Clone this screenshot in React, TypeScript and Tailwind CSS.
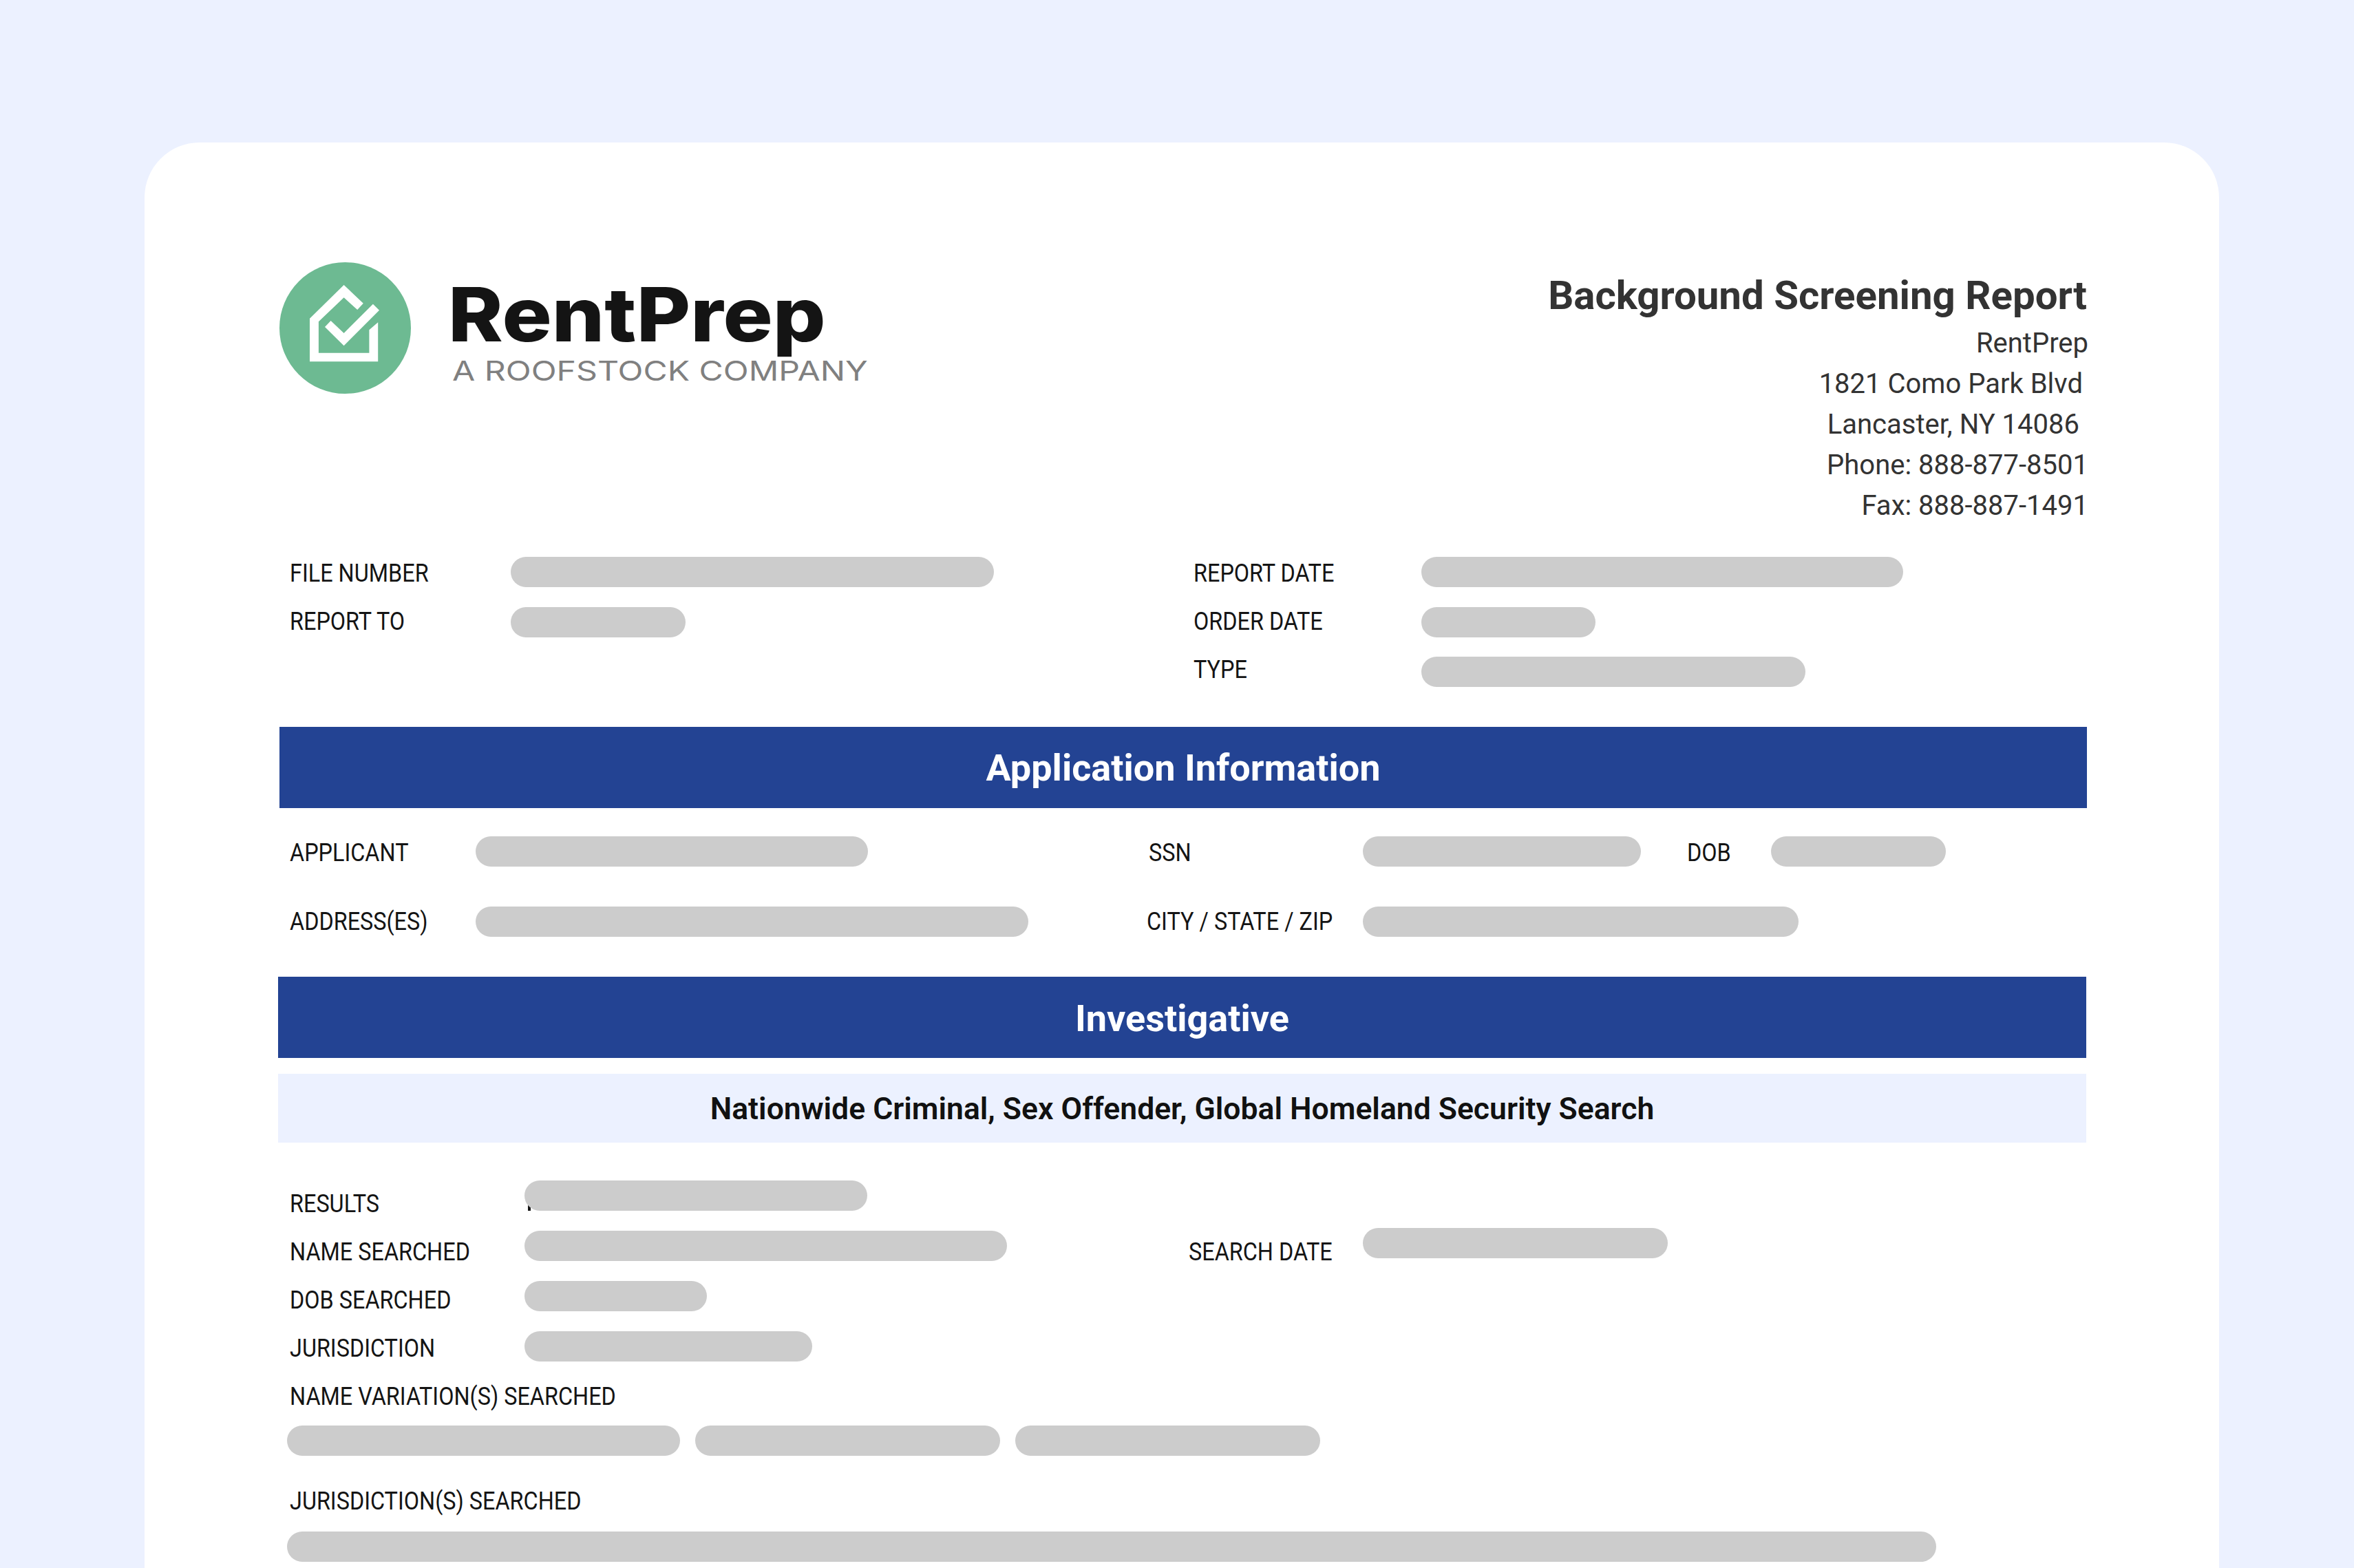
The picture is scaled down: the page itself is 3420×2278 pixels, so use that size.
const Pill = ({ className }: { className: string }) => (
  <div className={`h-[44px] shrink-0 rounded-full bg-[#cccccc] ${className}`} />
);

const Label = ({ children, className = "" }: { children: React.ReactNode; className?: string }) => (
  <div className={`h-[70px] shrink-0 whitespace-nowrap text-[36px] leading-[70px] text-[#141414] ${className}`}>
    <span className="inline-block origin-left scale-x-[0.9]">{children}</span>
  </div>
);

const Logo = () => (
  <div className="flex">
    <svg viewBox="0 0 191 191" className="h-[191px] w-[191px] shrink-0">
      <circle cx="95.5" cy="95.5" r="95.5" fill="#6dba92" />
      <path
        fill="#fff"
        d="M93.6 33 L121.8 59.7 L113.2 69 L93.6 51.3 L56.9 86.3 V131.7 H130.4 V98.3 L143.2 87.3 V144.3 H44 V81.7 Z"
      />
      <path fill="#fff" d="M135.9 60.7 L145 69.7 L93.6 121.3 L66 94 L74.6 85 L93.6 103 Z" />
    </svg>
    <div className="ml-[54px] pt-[26px] [font-family:Inter,sans-serif]">
      <div className="h-[100px] origin-left scale-x-[1.115] text-[108px] font-extrabold leading-[100px] text-[#141414]">
        RentPrep
      </div>
      <div className="ml-[6px] mt-[12px] h-[40px] origin-left scale-x-[1.205] whitespace-nowrap text-[40px] leading-[40px] text-[#808080]">
        A ROOFSTOCK COMPANY
      </div>
    </div>
  </div>
);

export default function App() {
  return (
    <div className="h-[2278px] w-[3420px] overflow-hidden bg-[#ecf1ff] pt-[207px] [font-family:Roboto,sans-serif]">
      <div className="ml-[210px] h-[2200px] w-[3014px] rounded-[80px] bg-white pl-[196px] pr-[192px] pt-[174px]">
        {/* Header */}
        <div className="flex items-start justify-between">
          <Logo />
          <div className="pt-[13px] text-right">
            <div className="h-[70px] text-[58.2px] font-bold leading-[70px] text-[#333333]">
              Background Screening Report
            </div>
            <div className="-mr-[2px] mt-[5px] text-[40px] leading-[59px] text-[#333333]">
              <div>RentPrep</div>
              <div className="pr-[8px]">1821 Como Park Blvd</div>
              <div className="pr-[13px]">Lancaster, NY 14086</div>
              <div>Phone: 888-877-8501</div>
              <div>Fax: 888-887-1491</div>
            </div>
          </div>
        </div>

        {/* Report meta */}
        <div className="mt-[34px] flex h-[201px] pl-[15px]">
          <div className="w-[321px] shrink-0">
            <Label>FILE NUMBER</Label>
            <Label>REPORT TO</Label>
          </div>
          <div className="flex w-[992px] shrink-0 flex-col gap-[28.5px] pt-[11px]">
            <Pill className="w-[702px]" />
            <Pill className="w-[254px]" />
          </div>
          <div className="w-[331px] shrink-0">
            <Label>REPORT DATE</Label>
            <Label>ORDER DATE</Label>
            <Label>TYPE</Label>
          </div>
          <div className="flex flex-col gap-[28.5px] pt-[11px]">
            <Pill className="w-[700px]" />
            <Pill className="w-[253px]" />
            <Pill className="w-[558px]" />
          </div>
        </div>

        {/* Application Information */}
        <div className="mt-[57px] flex h-[118px] items-center justify-center bg-[#234393] text-[54px] font-bold text-white">
          Application Information
        </div>
        <div className="mt-[41px] flex flex-col gap-[58px] pl-[15px]">
          <div className="flex h-[44px] items-center">
            <Label className="mt-[3px] w-[270px]">APPLICANT</Label>
            <Pill className="w-[570px]" />
            <Label className="ml-[408px] mt-[3px] w-[311px]">SSN</Label>
            <Pill className="w-[404px]" />
            <Label className="ml-[67px] mt-[3px] w-[122px]">DOB</Label>
            <Pill className="w-[254px]" />
          </div>
          <div className="flex h-[44px] items-center">
            <Label className="w-[270px]">ADDRESS(ES)</Label>
            <Pill className="w-[803px]" />
            <Label className="ml-[172px] w-[314px]">CITY / STATE / ZIP</Label>
            <Pill className="w-[633px]" />
          </div>
        </div>

        {/* Investigative */}
        <div className="-ml-[2px] mr-[1px] mt-[58px] flex h-[118px] items-center justify-center bg-[#234393] pt-[2px] text-[54px] font-bold text-white">
          Investigative
        </div>
        <div className="-ml-[2px] mr-[1px] mt-[23px] flex h-[100px] items-center justify-center bg-[#ecf1ff] pt-[2px] text-[44.5px] font-semibold text-[#111111]">
          Nationwide Criminal, Sex Offender, Global Homeland Security Search
        </div>

        {/* Search details */}
        <div className="mt-[54px] flex pl-[15px]">
          <div className="w-[341px] shrink-0">
            <Label>RESULTS</Label>
            <Label>NAME SEARCHED</Label>
            <Label>DOB SEARCHED</Label>
            <Label>JURISDICTION</Label>
          </div>
          <div className="flex w-[965px] shrink-0 flex-col gap-[29px] pt-[1px]">
            <div className="relative">
              <div className="absolute left-[5px] top-[36px] h-[8px] w-[4px] bg-[#141414]" />
              <Pill className="relative w-[498px]" />
            </div>
            <Pill className="w-[701px]" />
            <Pill className="w-[265px]" />
            <Pill className="w-[418px]" />
          </div>
          <div className="flex h-[141px] items-start">
            <Label className="mt-[70px] w-[253px]">SEARCH DATE</Label>
            <Pill className="mt-[70px] w-[443px]" />
          </div>
        </div>
        <Label className="ml-[15px]">NAME VARIATION(S) SEARCHED</Label>
        <div className="ml-[11px] mt-[7px] flex gap-[22px]">
          <Pill className="w-[571px]" />
          <Pill className="w-[443px]" />
          <Pill className="w-[443px]" />
        </div>
        <Label className="ml-[15px] mt-[31px]">JURISDICTION(S) SEARCHED</Label>
        <Pill className="ml-[11px] mt-[9px] w-[2396px]" />
      </div>
    </div>
  );
}
